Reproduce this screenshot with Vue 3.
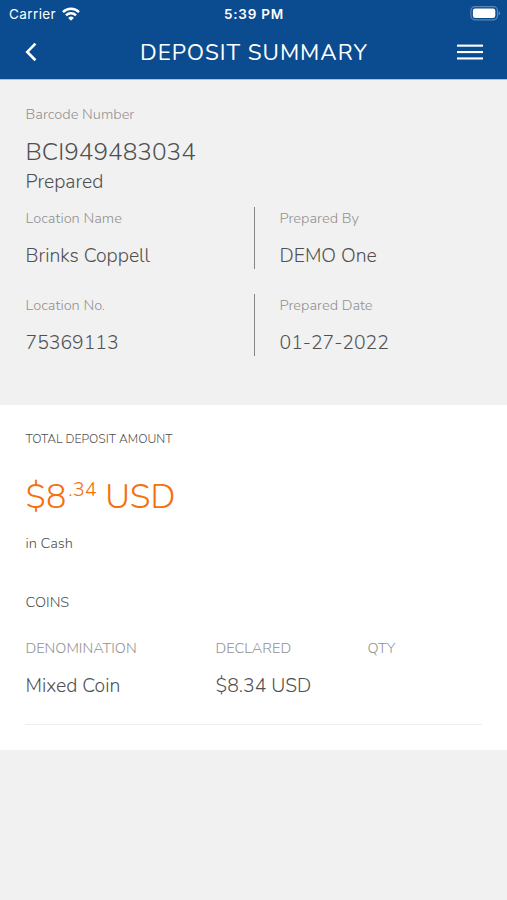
<script setup>
const deposit = {
  barcode: 'BCI949483034',
  status: 'Prepared',
};

// Detail rows, two fields each
const details = [
  [
    { label: 'Location Name', value: 'Brinks Coppell' },
    { label: 'Prepared By', value: 'DEMO One' },
  ],
  [
    { label: 'Location No.', value: '75369113' },
    { label: 'Prepared Date', value: '01-27-2022' },
  ],
];

const coins = [
  { denomination: 'Mixed Coin', declared: '$8.34 USD', qty: '' },
];
</script>

<template>
  <div class="screen">
    <header class="top">
      <div class="status-bar">
        <div class="carrier">
          <span>Carrier</span>
          <svg width="18" height="14" viewBox="0 0 18 14" fill="none" stroke="#fff" stroke-width="2.5">
            <path d="M1 5.1a11.4 11.4 0 0 1 16 0" />
            <path d="M4 8.4a7.1 7.1 0 0 1 10 0" />
            <path d="M9 13.8 6.2 10.9a4 4 0 0 1 5.6 0z" fill="#fff" stroke="none" />
          </svg>
        </div>
        <span class="time">5:39 PM</span>
        <svg class="battery" width="31" height="15" viewBox="0 0 31 15">
          <rect x="0.9" y="0.7" width="26.6" height="13.1" rx="4" fill="none" stroke="#5c85b4" stroke-width="1.2" />
          <rect x="2.9" y="2.6" width="22.4" height="9.3" rx="2.2" fill="#fff" />
          <path d="M28.6 5v4.6q1.5-.7 1.5-2.3T28.6 5z" fill="#5c85b4" />
        </svg>
      </div>
      <nav class="nav-bar">
        <svg width="14" height="20" viewBox="0 0 14 20" fill="none" stroke="#fff" stroke-width="2.7">
          <path d="M11.4 1.6 3.3 9.9l8.1 8.3" />
        </svg>
        <h1>DEPOSIT SUMMARY</h1>
        <svg width="26" height="17" viewBox="0 0 26 17" fill="#fff">
          <rect y="0.6" width="26" height="2.1" />
          <rect y="7" width="26" height="2.1" />
          <rect y="13.4" width="26" height="2.1" />
        </svg>
      </nav>
    </header>

    <section class="info">
      <div class="label">Barcode Number</div>
      <div class="barcode">{{ deposit.barcode }}</div>
      <div class="value prepared">{{ deposit.status }}</div>
      <div v-for="(row, i) in details" :key="i" class="detail-row">
        <div v-for="field in row" :key="field.label" class="field">
          <div class="label">{{ field.label }}</div>
          <div class="value">{{ field.value }}</div>
        </div>
      </div>
    </section>

    <section class="totals">
      <div class="total-label">TOTAL DEPOSIT AMOUNT</div>
      <div class="amount">
        <span>$8</span>
        <span class="cents">.34</span>
        <span class="currency">USD</span>
      </div>
      <div class="in-cash">in Cash</div>
      <h2>COINS</h2>
      <div class="coin-row head">
        <span>DENOMINATION</span>
        <span>DECLARED</span>
        <span>QTY</span>
      </div>
      <div v-for="coin in coins" :key="coin.denomination" class="coin-row value">
        <span>{{ coin.denomination }}</span>
        <span>{{ coin.declared }}</span>
        <span>{{ coin.qty }}</span>
      </div>
    </section>
  </div>
</template>

<style>
body {
  margin: 0;
  background: #f1f1f1;
}
</style>

<style scoped>
.screen {
  min-height: 900px;
  background: #f1f1f1;
  color: #505050;
  font-family: Nunito, Lato, sans-serif;
  font-weight: 300;
}

.top {
  box-sizing: border-box;
  height: 80px;
  border-bottom: 1px solid #a5c3e2;
  background: #0b4b8f;
  color: #fff;
}

.status-bar {
  display: grid;
  grid-template-columns: 1fr auto 1fr;
  align-items: center;
  height: 27px;
  padding: 0 6px 0 9px;
  font-family: Inter, "Liberation Sans", sans-serif;
  font-size: 13.5px;
  font-weight: 400;
}

.carrier {
  display: flex;
  align-items: center;
  gap: 6px;
  letter-spacing: 0.4px;
}

.time {
  margin-right: 2px;
  font-weight: 600;
  letter-spacing: 0.75px;
}

.battery {
  justify-self: end;
}

.nav-bar {
  display: flex;
  align-items: center;
  justify-content: space-between;
  height: 50px;
  padding: 0 24px;
}

h1 {
  margin: 0 0 0 13px;
  font-size: 22.5px;
  font-weight: 400;
  letter-spacing: 0.95px;
}

.info {
  box-sizing: border-box;
  height: 325px;
  padding: 23px 25px 0 25.5px;
}

.label {
  height: 22px;
  line-height: 22px;
  font-size: 14.6px;
  color: #919191;
}

.barcode {
  margin-top: 11px;
  height: 32px;
  line-height: 32px;
  font-size: 24.4px;
}

.value {
  line-height: 26px;
  font-size: 19.4px;
}

.prepared {
  padding-top: 1px;
  height: 38px;
}

.detail-row {
  display: grid;
  grid-template-columns: 228.5px 1fr;
  height: 62px;
  margin-bottom: 25px;
}

.field .value {
  margin-top: 14px;
}

.field + .field {
  border-left: 1px solid #858585;
  padding-left: 24.5px;
}

.totals {
  box-sizing: border-box;
  height: 345px;
  padding: 24px 25px 0 25.5px;
  background: #fff;
}

.total-label {
  line-height: 20px;
  font-size: 12.2px;
}

.amount {
  display: flex;
  margin-top: 28px;
  height: 40px;
  line-height: 40px;
  font-size: 34px;
  color: #f4700c;
}

.cents {
  margin-left: 2px;
  line-height: 26px;
  font-size: 20px;
}

.currency {
  margin-left: 8.5px;
}

.in-cash {
  margin-top: 15px;
  line-height: 22px;
  font-size: 14.6px;
}

h2 {
  margin: 37px 0 24px;
  line-height: 22px;
  font-size: 14.6px;
  font-weight: 300;
}

.coin-row {
  display: grid;
  grid-template-columns: 190px 152px 1fr;
}

.head {
  line-height: 22px;
  font-size: 14.6px;
  color: #919191;
}

.coin-row.value {
  margin: 14px 0 0 -1px;
  padding: 0 0 25px 1px;
  border-bottom: 1px solid #eee;
}
</style>
